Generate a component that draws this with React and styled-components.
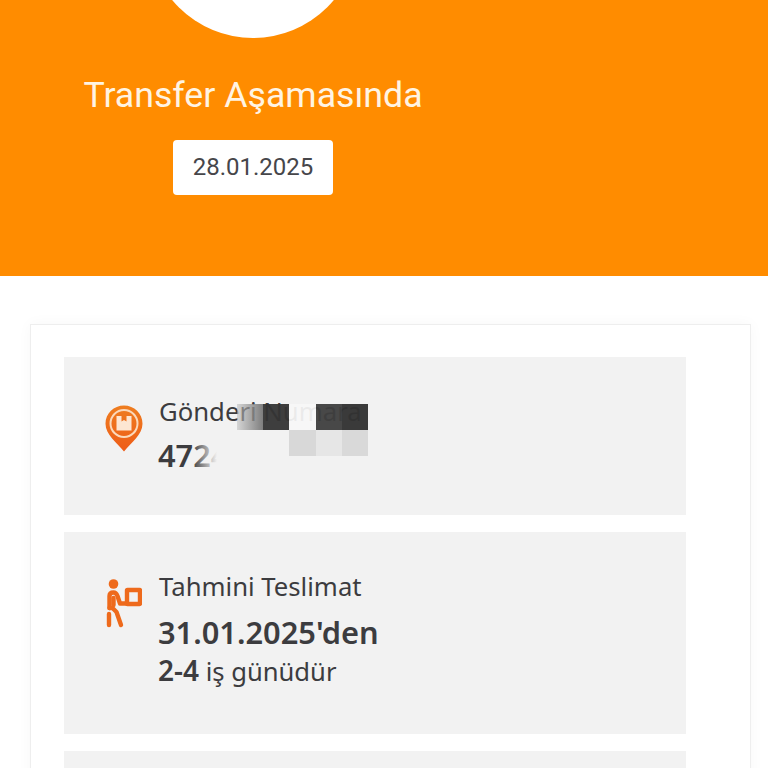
import React from 'react';
import styled, {createGlobalStyle} from 'styled-components';

const Global=createGlobalStyle`
    html,body{
        margin:0;
        padding:0;
        background:#fff;
    }
`
const Page=styled.div`
    width:768px;
    height:768px;
    overflow:hidden;
    background:#fff;
`
const Hero=styled.header`
    height:276px;
    background:#ff8c00;
    overflow:hidden;
`
const HeroColumn=styled.div`
    width:506px;
    display:flex;
    flex-direction:column;
    align-items:center;
`
const Circle=styled.div`
    width:210px;
    height:210px;
    margin-top:-172px;
    border-radius:50%;
    background:#fff;
`
const Title=styled.h1`
    margin:32px 0 0;
    font:400 35.7px/50px Roboto,sans-serif;
    color:#fff4e3;
    white-space:nowrap;
`
const DateBadge=styled.div`
    margin-top:20px;
    width:160px;
    height:55px;
    padding-bottom:2px;
    box-sizing:border-box;
    display:flex;
    align-items:center;
    justify-content:center;
    background:#fff;
    border-radius:4px;
    font:400 24px Roboto,sans-serif;
    color:#46464a;
`
const Card=styled.section`
    box-sizing:border-box;
    width:721px;
    margin:48px 0 0 30px;
    padding:32px 64px 0 33px;
    display:flex;
    flex-direction:column;
    gap:17px;
    background:#fff;
    border:1px solid #eeeeee;
    box-shadow:0 0 14px rgba(0,0,0,0.035);
`
const Row=styled.div`
    box-sizing:border-box;
    position:relative;
    height:${props=>props.$height}px;
    padding:33px 0 0 41px;
    display:flex;
    gap:16px;
    background:#f2f2f2;
`
const IconBox=styled.div`
    flex:none;
    width:38px;
    display:flex;
    justify-content:center;
    padding-top:${props=>props.$top}px;
`
const Texts=styled.div`
    display:flex;
    flex-direction:column;
    font-family:"Noto Sans",sans-serif;
    color:#3c3c3f;
`
const Label=styled.div`
    font-size:25.7px;
    line-height:44px;
`
const Value=styled.div`
    margin:${props=>props.$shift}px 0 0 -1px;
    font-size:30.8px;
    line-height:46px;
    font-weight:600;
`
const Note=styled.div`
    margin-left:-1px;
    font-size:25.6px;
    line-height:30px;
    b{
        font-size:28px;
        font-weight:600;
    }
`
const Fade=styled.div`
    position:absolute;
    left:128px;
    top:74px;
    width:50px;
    height:42px;
    background:linear-gradient(to right,rgba(242,242,242,0),#f2f2f2 50%);
`
const Mosaic=styled.div`
    position:absolute;
    left:173px;
    top:47px;
    display:grid;
    grid-template-columns:repeat(5,26.2px);
    grid-auto-rows:26px;
`
const Tile=styled.div`
    background:${props=>props.$color};
`

const tiles=[
    'linear-gradient(to right,rgba(190,190,190,0.55),rgba(120,120,120,0.95))','rgba(52,52,52,0.95)','rgba(248,248,248,0.93)','rgba(62,62,62,0.95)','rgba(50,50,50,0.96)',
    'transparent','transparent','#d8d8d8','#e6e6e6','#d9d9d9',
];

function PinIcon(){
    return(
        <svg width="38" height="47" viewBox="0 0 38 47">
            <defs>
                <linearGradient id="pinFill" x1="0" y1="0" x2="0" y2="1">
                    <stop offset="0" stopColor="#ee7d20"/>
                    <stop offset="1" stopColor="#ee5c18"/>
                </linearGradient>
            </defs>
            <path d="M19 0.5C8.8 0.5 0.5 8.5 0.5 18.8C0.5 29.5 12 38 19 46.5C26 38 37.5 29.5 37.5 18.8C37.5 8.5 29.2 0.5 19 0.5Z" fill="url(#pinFill)"/>
            <circle cx="19" cy="18.5" r="13.5" fill="none" stroke="#fbd9bb" strokeWidth="2"/>
            <path d="M11.5 11H16.5V16.5L19 15L21.5 16.5V11H26.5V25.5H11.5Z" fill="#fde6d2"/>
        </svg>
    );
}

function CourierIcon(){
    return(
        <svg width="36" height="50" viewBox="0 0 36 50" fill="none" stroke="#ee6a1c" strokeWidth="4.4" strokeLinecap="round" strokeLinejoin="round">
            <circle cx="7.5" cy="6" r="4.8" fill="#ee6a1c" stroke="none"/>
            <path d="M3.5 30V18C3.5 15.5 5 14.5 7.5 14.5C9.5 14.5 10.5 15.5 11.5 18L14 25.5H21"/>
            <path d="M3.5 30H6.5L10.5 34L15 47"/>
            <path d="M7.5 20V27"/>
            <path d="M3 36V47"/>
            <rect x="21" y="12" width="13" height="14" rx="0.5"/>
        </svg>
    );
}

export default function App(){
    return(
        <Page>
            <Global/>
            <Hero>
                <HeroColumn>
                    <Circle/>
                    <Title>Transfer Aşamasında</Title>
                    <DateBadge>28.01.2025</DateBadge>
                </HeroColumn>
            </Hero>
            <Card>
                <Row $height={158}>
                    <IconBox $top={15}><PinIcon/></IconBox>
                    <Texts>
                        <Label>Gönderi Numara</Label>
                        <Value $shift={-2}>4724</Value>
                    </Texts>
                    <Fade/>
                    <Mosaic>
                        {tiles.map((color,i)=><Tile key={i} $color={color}/>)}
                    </Mosaic>
                </Row>
                <Row $height={202}>
                    <IconBox $top={13}><CourierIcon/></IconBox>
                    <Texts>
                        <Label>Tahmini Teslimat</Label>
                        <Value $shift={0}>31.01.2025'den</Value>
                        <Note><b>2-4</b> iş günüdür</Note>
                    </Texts>
                </Row>
                <Row $height={60}/>
            </Card>
        </Page>
    );
}
